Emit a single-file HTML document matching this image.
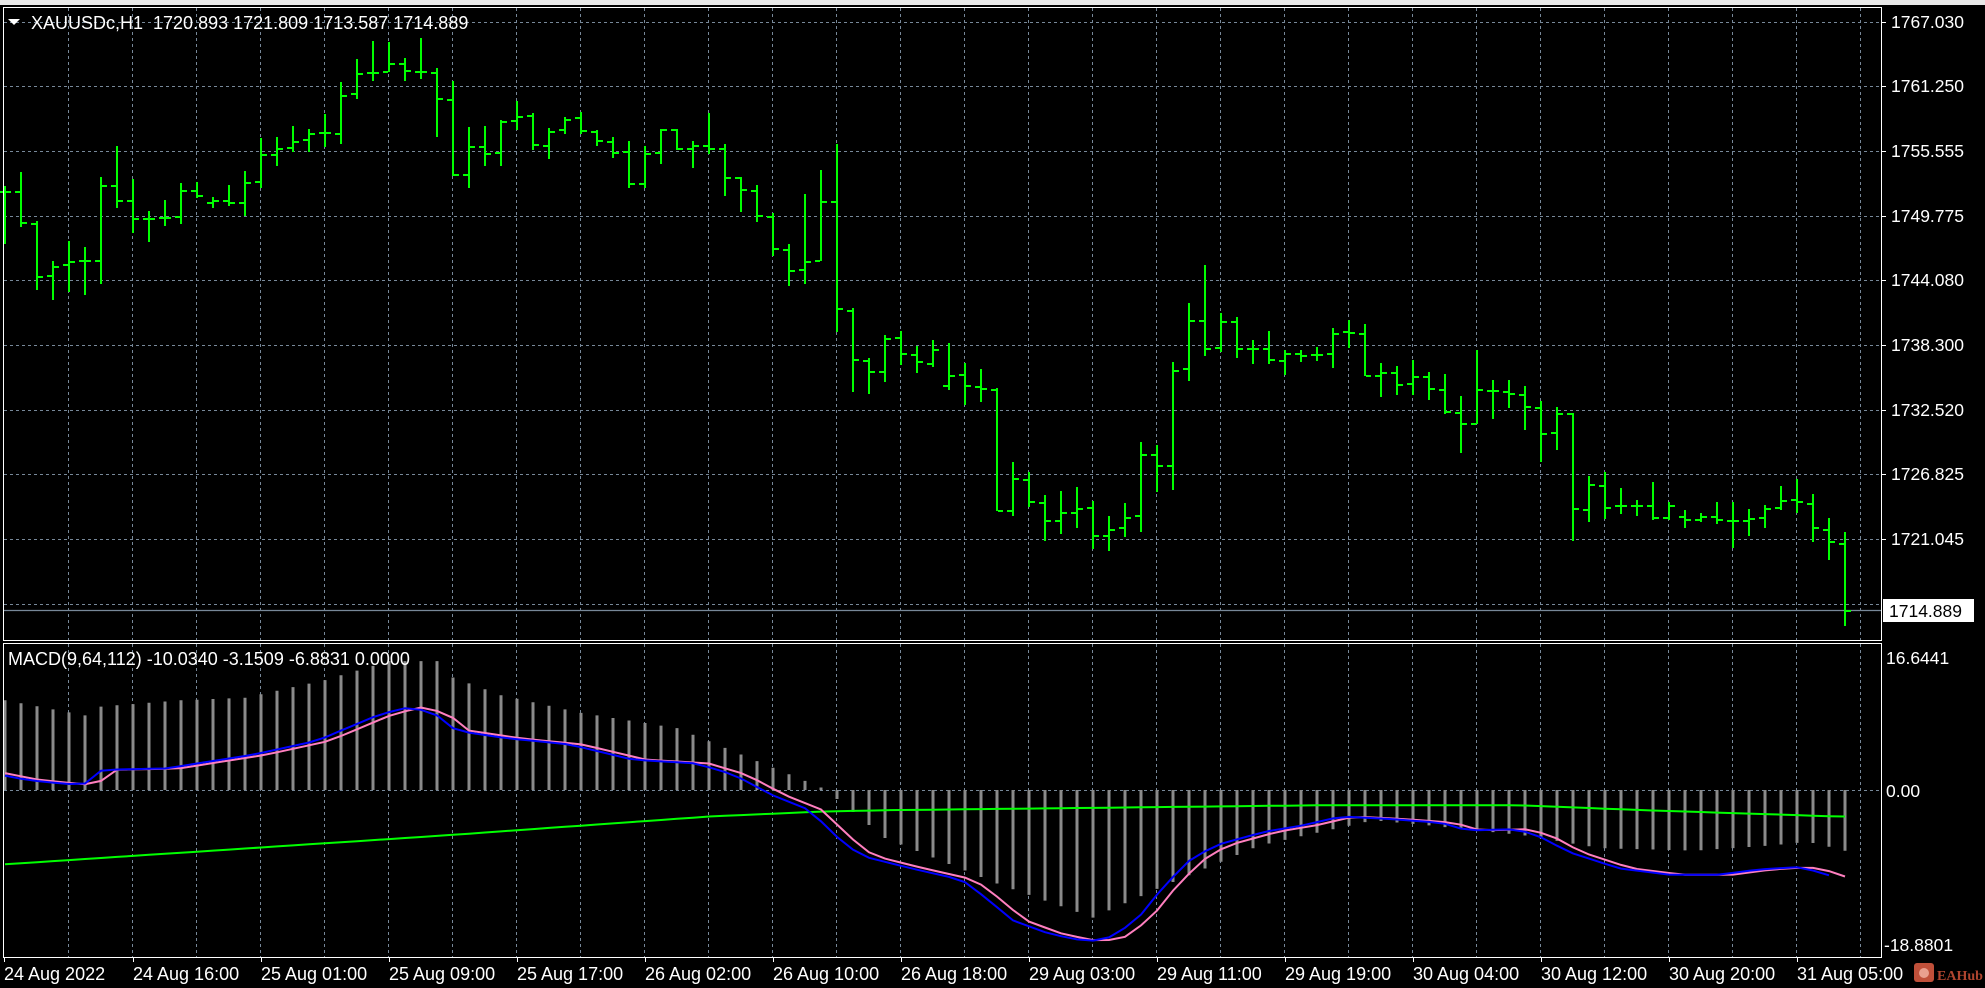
<!DOCTYPE html>
<html><head><meta charset="utf-8">
<style>
html,body{margin:0;padding:0;background:#000;width:1985px;height:988px;overflow:hidden}
svg{display:block}
text{font-family:"Liberation Sans",Arial,sans-serif;fill:#fff}
</style></head>
<body>
<svg id="s" width="1985" height="988" xmlns="http://www.w3.org/2000/svg">
<rect x="0" y="0" width="1985" height="988" fill="#000"/>
<rect x="0" y="0" width="1985" height="5" fill="#e8e8e8"/>
<g id="grid"></g>
<g id="macd"></g>
<g id="bars"></g>
<rect x="3.5" y="7.5" width="1878" height="633" fill="none" stroke="#fff" stroke-width="1"/>
<rect x="3.5" y="643.5" width="1878" height="314" fill="none" stroke="#fff" stroke-width="1"/>
<polygon points="8,19 20,19 14,25" fill="#fff"/>
<text x="31" y="29" font-size="18" style="white-space:pre" xml:space="preserve">XAUUSDc,H1  1720.893 1721.809 1713.587 1714.889</text>
<text x="8" y="665" font-size="18">MACD(9,64,112) -10.0340 -3.1509 -6.8831 0.0000</text>
<g font-size="17.5" id="axis"></g>
<rect x="1883" y="599" width="91" height="23" fill="#fff"/>
<text x="1889" y="617" font-size="17.5" style="fill:#000">1714.889</text>
<text x="1886" y="664" font-size="17.5">16.6441</text>
<text x="1886" y="797" font-size="17.5">0.00</text>
<text x="1884" y="951" font-size="17.5">-18.8801</text>
<g id="time" font-size="18"></g>
<rect x="1914" y="963" width="20" height="19" rx="3" fill="#c0503a"/>
<circle cx="1924" cy="973" r="5" fill="#e9a08f"/>
<text x="1937" y="980" font-size="14" style="fill:#b0452f;font-family:'Liberation Serif',serif;font-weight:bold">EAHub</text>
</svg>
<script>
var NS="http://www.w3.org/2000/svg";
function el(p,t,a){var e=document.createElementNS(NS,t);for(var k in a)e.setAttribute(k,a[k]);p.appendChild(e);return e;}
var grid=document.getElementById('grid');
var hy=[22,86,151,216,280,345,410,474,539,604];
hy.forEach(function(y){el(grid,'line',{x1:4,x2:1881,y1:y+0.5,y2:y+0.5,stroke:'#778899','stroke-dasharray':'3,3'});});
for(var x=68;x<=1870;x+=64){
 el(grid,'line',{x1:x+0.5,x2:x+0.5,y1:8,y2:640,stroke:'#778899','stroke-dasharray':'3,3'});
 el(grid,'line',{x1:x+0.5,x2:x+0.5,y1:644,y2:957,stroke:'#778899','stroke-dasharray':'3,3'});
}
el(grid,'line',{x1:4,x2:1881,y1:790.5,y2:790.5,stroke:'#778899','stroke-dasharray':'3,3'});
el(grid,'line',{x1:4,x2:1881,y1:610.5,y2:610.5,stroke:'#778899','stroke-width':1.2});
var ax=document.getElementById('axis');
var pl=['1767.030','1761.250','1755.555','1749.775','1744.080','1738.300','1732.520','1726.825','1721.045'];
pl.forEach(function(t,i){var y=hy[i];el(ax,'line',{x1:1881,x2:1886,y1:y+0.5,y2:y+0.5,stroke:'#fff'});var tx=el(ax,'text',{x:1891,y:y+6});tx.textContent=t;});
var tl=['24 Aug 2022','24 Aug 16:00','25 Aug 01:00','25 Aug 09:00','25 Aug 17:00','26 Aug 02:00','26 Aug 10:00','26 Aug 18:00','29 Aug 03:00','29 Aug 11:00','29 Aug 19:00','30 Aug 04:00','30 Aug 12:00','30 Aug 20:00','31 Aug 05:00'];
var tg=document.getElementById('time');
tl.forEach(function(t,i){var x=i==0?4:5+128*i;el(tg,'line',{x1:x+0.5,x2:x+0.5,y1:957,y2:962,stroke:'#fff'});var tx=el(tg,'text',{x:x,y:980});tx.textContent=t;});
var B=[[186,243,191,191],[172,226,191,222],[221,289,223,276],[261,299,275,266],[241,291,264,261],[247,294,260,260],[177,283,260,185],[146,207,185,200],[179,232,200,218],[211,241,218,218],
[200,225,217,217],[183,223,216,190],[182,197,190,195],[197,207,202,200],[185,205,200,202],[171,215,202,182],[138,187,181,154],[137,165,154,148],[126,151,147,141],[129,151,139,133],
[114,146,132,132],[82,143,133,95],[59,98,93,73],[41,80,72,72],[42,71,71,63],[58,80,63,70],[38,78,71,71],[68,136,72,98],[81,175,99,174],[127,187,174,146],
[126,165,146,153],[120,165,152,121],[101,129,120,116],[113,149,115,144],[128,158,145,131],[117,133,129,119],[112,133,117,130],[130,145,131,140],[137,157,141,152],[141,187,151,183],
[146,187,183,153],[129,163,152,129],[129,149,129,148],[141,167,148,145],[113,153,145,148],[144,195,148,177],[177,211,177,189],[185,221,190,215],[213,255,216,248],[244,285,249,270],
[194,283,269,261],[170,260,260,201],[144,331,201,308],[308,391,310,359],[358,393,360,371],[335,381,371,338],[331,364,337,353],[346,372,354,361],[340,366,363,349],[343,389,385,375],
[363,404,374,385],[369,401,386,388],[388,510,389,510],[462,515,510,478],[472,506,479,501],[495,540,502,520],[491,533,520,512],[487,527,512,508],[501,548,507,535],[516,550,535,529],
[503,536,527,517],[442,531,515,454],[445,491,454,465],[362,489,465,370],[303,380,368,320],[265,355,320,348],[313,351,347,321],[317,357,321,348],[340,363,348,348],[331,363,348,359],
[350,374,360,353],[350,361,353,355],[347,360,354,354],[328,367,353,333],[320,347,331,332],[324,375,333,375],[363,396,375,372],[366,394,372,384],[360,394,383,376],[372,399,376,388],
[374,413,389,411],[396,452,412,423],[350,423,423,389],[380,418,390,390],[380,407,391,393],[386,429,394,406],[401,461,407,433],[407,449,432,413],[413,540,413,508],[476,521,509,484],
[472,518,485,507],[488,513,505,505],[500,515,505,505],[482,519,505,517],[502,519,517,505],[510,527,516,519],[513,521,519,516],[502,523,516,519],[502,547,520,520],[509,535,520,518],
[505,527,517,508],[486,509,507,500],[479,512,499,501],[494,541,503,527],[518,559,529,541],[532,625,543,610]];
var bg=document.getElementById('bars');var d='';
B.forEach(function(b,i){var x=4+16*i;
 d+='M'+(x+1)+' '+b[0]+'V'+(b[1]+1)+'M'+(x-5)+' '+(b[2]+1)+'H'+x+'M'+(x+2)+' '+(b[3]+1)+'H'+(x+7);});
el(bg,'path',{d:d,stroke:'#00ff00','stroke-width':2,fill:'none'});
function interp(pts,i){for(var k=0;k<pts.length-1;k++){if(i<=pts[k+1][0]){var a=pts[k],b=pts[k+1];var t=(i-a[0])/(b[0]-a[0]);return a[1]+t*(b[1]-a[1]);}}return pts[pts.length-1][1];}
function R(yd){return 790+(yd-624)*1.2636;}
var H=[[0,553],[5,565],[6,558],[11,553],[15,551],[20,537],[24,522],[27,522],[28,535],[31,549],[36,563],[42,575],[46.4,598],[51,622],[51.5,626],[55,662],[62,698],[68,725],[72.4,700],[78.4,668],[85.5,648],[89,652],[95,660],[99.7,670],[105.6,672],[110.3,668],[112.7,665],[115,672]];
var mg=document.getElementById('macd');var hd='';
for(var i=0;i<116;i++){var x=4+16*i+1;var y=R(interp(H,i));hd+='M'+x+' 790V'+y.toFixed(1);}
el(mg,'path',{d:hd,stroke:'#8a8a8a','stroke-width':3,fill:'none'});
function X2i(xd){return xd*0.079-0.25;}
var G=[[0,683],[350,660],[560,645],[650,641],[700,640],[1050,636],[1200,636],[1300,640],[1455,645]];
var BL=[[0,612],[20,616],[50,619],[65,620],[80,608],[130,607],[200,596],[250,585],[300,564],[325,558],[345,565],[360,577],[400,583],[450,588],[500,600],[550,603],[580,612],[610,628],[640,640],[660,660],[680,676],[720,686],[760,695],[780,710],[800,727],[830,738],[860,744],[880,740],[900,725],[920,700],[940,680],[960,668],[1000,657],[1030,652],[1060,645],[1100,647],[1140,650],[1160,656],[1200,655],[1220,662],[1240,673],[1280,686],[1320,691],[1360,691],[1390,687],[1420,685],[1440,689],[1455,695]];
function conv(p){return p.map(function(q){return [X2i(q[0]),q[1]];});}
var Gi=conv(G),Bi=conv(BL);
function line(pts,n0,n1,shift,col){var s='';for(var i=n0;i<=n1;i++){var x=4+16*i+1;var y=R(interp(pts,i-shift));s+=(i==n0?'M':'L')+x+' '+y.toFixed(1);}el(mg,'path',{d:s,stroke:col,'stroke-width':2,fill:'none'});}
line(Gi,0,115,0,'#00ff00');
line(Bi,0,115,0.8,'#ff7fbf');
line(Bi,0,114,0,'#0000ff');
</script>
</body></html>
